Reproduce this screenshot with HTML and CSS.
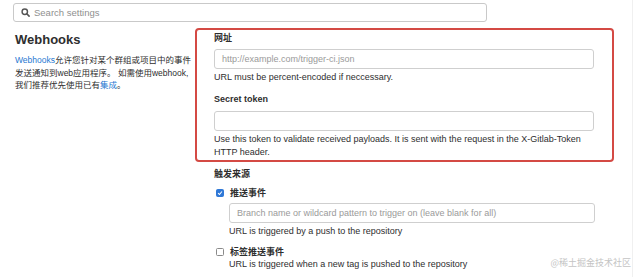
FILE: index.html
```html
<!DOCTYPE html>
<html lang="zh-CN">
<head>
<meta charset="utf-8">
<title>Webhooks</title>
<link rel="stylesheet" href="styles.css">
</head>
<body>
<div class="page">
  <div class="search">
    <svg class="search-icon" width="9" height="9" viewBox="0 0 10 10"><circle cx="4.2" cy="4.2" r="3" fill="none" stroke="#555" stroke-width="1.6"/><line x1="6.4" y1="6.4" x2="9" y2="9" stroke="#555" stroke-width="1.8" stroke-linecap="round"/></svg>
    <span class="search-ph">Search settings</span>
  </div>
  <div class="main">
    <div class="side">
      <h2 class="title">Webhooks</h2>
      <p class="desc"><a class="link">Webhooks</a>允许您针对某个群组或项目中的事件<br>发送通知到web应用程序。 如需使用webhook,<br>我们推荐优先使用已有<a class="link">集成</a>。</p>
    </div>
    <div class="content">
      <div class="highlight">
        <div class="label">网址</div>
        <div class="input"><span class="ph">http://example.com/trigger-ci.json</span></div>
        <div class="help">URL must be percent-encoded if neccessary.</div>
        <div class="label label-gap">Secret token</div>
        <div class="input"></div>
        <div class="help">Use this token to validate received payloads. It is sent with the request in the X-Gitlab-Token HTTP header.</div>
      </div>
      <div class="triggers">
        <div class="label">触发来源</div>
        <div class="check-row">
          <span class="box checked"><svg width="8" height="8" viewBox="0 0 8 8"><path d="M1.5 4.2 L3.3 6 L6.6 2" fill="none" stroke="#fff" stroke-width="1.4"/></svg></span>
          <span class="check-label">推送事件</span>
        </div>
        <div class="sub">
          <div class="input"><span class="ph">Branch name or wildcard pattern to trigger on (leave blank for all)</span></div>
          <div class="help">URL is triggered by a push to the repository</div>
        </div>
        <div class="check-row row-gap">
          <span class="box"></span>
          <span class="check-label">标签推送事件</span>
        </div>
        <div class="sub sub-tight">
          <div class="help">URL is triggered when a new tag is pushed to the repository</div>
        </div>
      </div>
    </div>
  </div>
  <div class="watermark">@稀土掘金技术社区</div>
  <div class="edge"></div>
</div>
</body>
</html>
```
FILE: styles.css
```css
* { box-sizing: border-box; }
html, body {
  margin: 0;
  padding: 0;
  background: #fff;
}
body {
  font-family: "Liberation Sans", Arial, "Noto Sans CJK SC", sans-serif;
  color: #2e2e2e;
  font-size: 9px;
  width: 640px;
  height: 277px;
  overflow: hidden;
}
.page {
  position: relative;
  height: 277px;
  padding: 3px 0 0 13px;
}
.search {
  width: 474px;
  height: 19px;
  border: 1px solid #c9c9c9;
  border-radius: 3px;
  display: flex;
  align-items: center;
  padding-left: 7px;
  gap: 4px;
}
.search-ph {
  color: #8f8f8f;
  font-size: 9.5px;
}
.main {
  display: flex;
  margin-top: 6px;
}
.side {
  width: 182px;
  padding: 4px 0 0 2px;
}
.title {
  margin: 0;
  font-size: 13px;
  font-weight: bold;
  line-height: 16px;
  color: #2e2e2e;
}
.desc {
  margin: 6px 0 0 0;
  line-height: 12.5px;
  font-size: 8.5px;
  white-space: nowrap;
}
.link { color: #1f78d1; }
.content {
  width: 419px;
}
.highlight {
  border: 2px solid #d44a44;
  border-radius: 4px;
  padding: 2px 17px 1px 17px;
}
.label {
  font-weight: bold;
  line-height: 13px;
  margin-bottom: 4px;
}
.label-gap {
  margin-top: 9px;
  margin-bottom: 5px;
}
.input {
  height: 20px;
  border: 1px solid #cfcfcf;
  border-radius: 3px;
  display: flex;
  align-items: center;
  padding-left: 7px;
  width: 380px;
}
.ph {
  color: #9a9a9a;
}
.help {
  margin-top: 2px;
  line-height: 13px;
  color: #2e2e2e;
}
.triggers {
  padding: 6px 0 0 19px;
}
.check-row {
  display: flex;
  align-items: center;
  gap: 6px;
  height: 13px;
  margin-top: 5px;
  padding-left: 2px;
}
.row-gap { margin-top: 7px; }
.box {
  width: 8px;
  height: 8px;
  border: 1px solid #8a8a8a;
  border-radius: 1.5px;
  display: flex;
  align-items: center;
  justify-content: center;
}
.box.checked {
  background: #2f78d7;
  border-color: #2f78d7;
}
.check-label { font-weight: bold; }
.sub {
  padding-left: 15px;
  margin-top: 4px;
}
.sub .input { width: 366px; }
.sub-tight { margin-top: 0; }
.sub-tight .help { margin-top: 0; }
.watermark {
  position: absolute;
  right: 9px;
  bottom: 8px;
  color: #c4c4c4;
  font-size: 9px;
  font-family: "Noto Sans CJK SC", sans-serif;
}
.edge {
  position: absolute;
  top: 0;
  right: 7px;
  width: 1px;
  height: 277px;
  background: #f0f0f0;
}
```
